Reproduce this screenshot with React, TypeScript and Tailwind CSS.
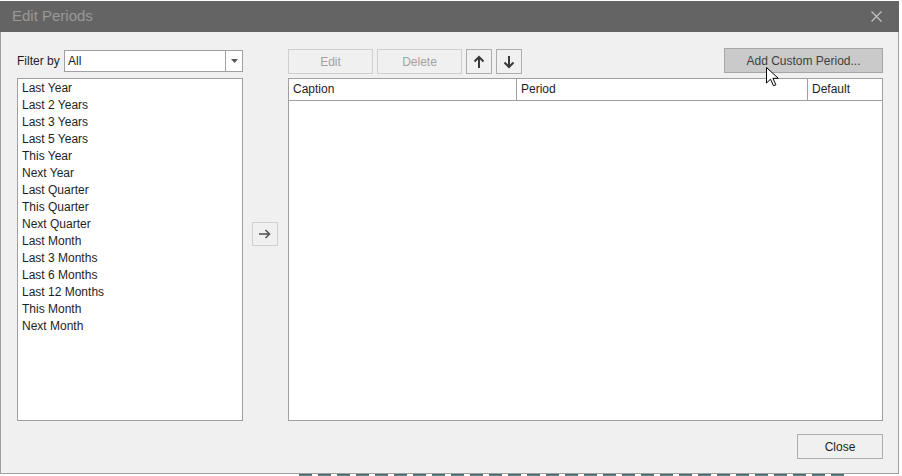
const periods = [
    'Last Year',
    'Last 2 Years',
    'Last 3 Years',
    'Last 5 Years',
    'This Year',
    'Next Year',
    'Last Quarter',
    'This Quarter',
    'Next Quarter',
    'Last Month',
    'Last 3 Months',
    'Last 6 Months',
    'Last 12 Months',
    'This Month',
    'Next Month',
]

const UpArrow = () => (
    <svg width="12" height="14" viewBox="0 0 12 14" fill="none" stroke="#3a3a3a" strokeWidth="2">
        <path d="M6 13V2" />
        <path d="M1.5 6.5L6 2l4.5 4.5" />
    </svg>
)

const DownArrow = () => (
    <svg width="12" height="14" viewBox="0 0 12 14" fill="none" stroke="#3a3a3a" strokeWidth="2">
        <path d="M6 1v11" />
        <path d="M1.5 7.5L6 12l4.5-4.5" />
    </svg>
)

const App = () => {
    return (
        <div className="relative w-[902px] h-[476px] overflow-hidden bg-white font-['Liberation_Sans',Arial,sans-serif] text-[12px] text-[#1e1e1e]">
            <div className="mt-px w-[899px] h-[473px] flex flex-col">
                {/* title bar */}
                <div className="h-[31px] bg-[#646464] flex items-center justify-between pl-[12px] pr-[17px]">
                    <span className="text-[15px] text-[#999999]">Edit Periods</span>
                    <svg width="11" height="11" viewBox="0 0 11 11" stroke="#c4c4c4" strokeWidth="1.2">
                        <path d="M0.5 0.5l10 10M10.5 0.5l-10 10" />
                    </svg>
                </div>

                <div className="flex-1 bg-[#f0f0f0] border-x border-b border-[#a0a0a0] pl-[16px] pr-[15px] pt-[18px] flex flex-col">
                    <div className="flex">
                        {/* left column */}
                        <div className="w-[226px] flex flex-col">
                            <div className="h-[22px] flex items-center justify-between">
                                <span>Filter by</span>
                                <div className="w-[179px] h-[22px] border border-[#a0a0a0] bg-white flex">
                                    <div className="flex-1 flex items-center pl-[3px]">All</div>
                                    <div className="w-[17px] border-l border-[#a0a0a0] flex items-center justify-center">
                                        <svg width="7" height="4" viewBox="0 0 7 4">
                                            <path d="M0 0h7L3.5 4z" fill="#555" />
                                        </svg>
                                    </div>
                                </div>
                            </div>
                            <div className="mt-[6px] h-[343px] border border-[#a0a0a0] bg-white pl-[4px] pt-px leading-[17px]">
                                {periods.map(p => (
                                    <div key={p}>{p}</div>
                                ))}
                            </div>
                        </div>

                        {/* add arrow */}
                        <div className="ml-[9px] mt-[172px] w-[26px] h-[24px] border border-[#d0d0d0] flex items-center justify-center self-start">
                            <svg width="12" height="10" viewBox="0 0 12 10" fill="none" stroke="#555" strokeWidth="1.6">
                                <path d="M0 5h10.5" />
                                <path d="M6.5 1l4 4-4 4" />
                            </svg>
                        </div>

                        {/* right column */}
                        <div className="ml-[10px] -mt-[2px] w-[595px] flex flex-col">
                            <div className="h-[30px] flex items-start">
                                <div className="mt-px w-[85px] h-[25px] border border-[#cfcfcf] flex items-center justify-center text-[#a2a2a2]">Edit</div>
                                <div className="mt-px ml-[4px] w-[85px] h-[25px] border border-[#cfcfcf] flex items-center justify-center text-[#a2a2a2]">Delete</div>
                                <div className="mt-px ml-[4px] w-[26px] h-[25px] border border-[#adadad] flex items-center justify-center"><UpArrow /></div>
                                <div className="mt-px ml-[4px] w-[26px] h-[25px] border border-[#adadad] flex items-center justify-center"><DownArrow /></div>
                                <div className="ml-auto w-[159px] h-[25px] border border-[#a6a6a6] bg-[#cacaca] flex items-center justify-center text-[#404040]">Add Custom Period...</div>
                            </div>
                            <div className="h-[343px] border border-[#a0a0a0] bg-white flex flex-col">
                                <div className="h-[22px] flex border-b border-[#a0a0a0] leading-[20px]">
                                    <div className="w-[228px] border-r border-[#a0a0a0] pl-[4px]">Caption</div>
                                    <div className="w-[291px] border-r border-[#a0a0a0] pl-[4px]">Period</div>
                                    <div className="flex-1 pl-[4px]">Default</div>
                                </div>
                            </div>
                        </div>
                    </div>

                    <div className="mt-[13px] flex justify-end">
                        <div className="w-[86px] h-[25px] border border-[#adadad] flex items-center justify-center">Close</div>
                    </div>
                </div>
            </div>

            {/* bit of the window behind */}
            <div className="ml-[299px] flex gap-[6px]">
                {Array.from({ length: 29 }).map((_, i) => (
                    <div key={i} className="w-[13px] h-[3px] bg-[#5f858b] border-t border-[#45666b]" />
                ))}
            </div>

            {/* mouse pointer */}
            <svg className="absolute left-[766px] top-[67px]" width="13" height="20" viewBox="0 0 13 20">
                <path d="M0.5 0.5V16l4-3.8 3 6.6 2.4-1-3-6.5h5.4z" fill="#fff" stroke="#000" strokeWidth="1" strokeLinejoin="round" />
            </svg>
        </div>
    )
}

export default App
